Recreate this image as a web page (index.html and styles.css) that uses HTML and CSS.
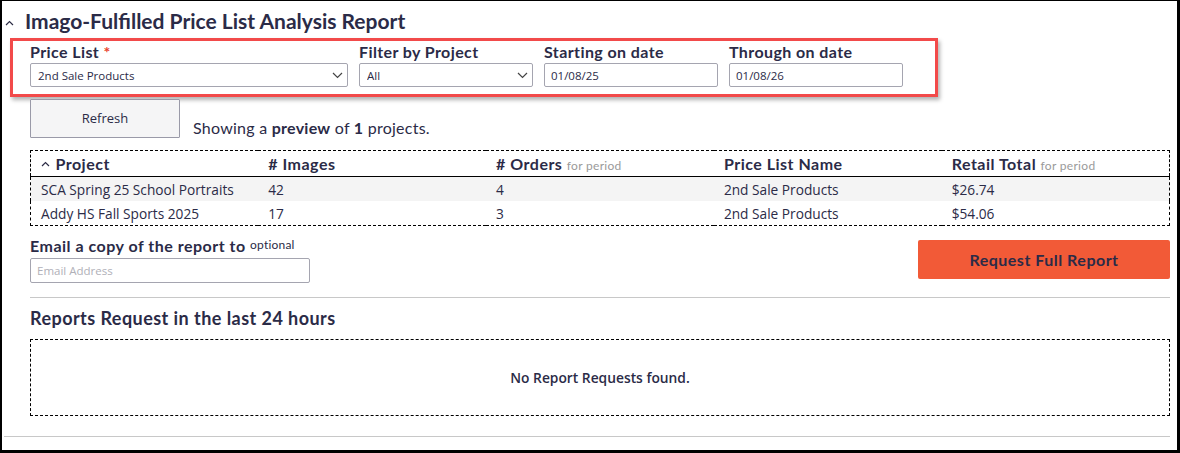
FILE: index.html
```html
<!DOCTYPE html>
<html lang="en">

<head>
  <meta charset="UTF-8">
  <meta name="viewport" content="width=device-width, initial-scale=1.0">
  <title>Price List Analysis Report</title>
  <link rel="stylesheet" href="styles.css">
</head>

<body>
  <div class="frame">
    <div class="report">
      <h2 class="report-title">
        <svg class="chev" width="9" height="6" viewBox="0 0 9 6"><path d="M1 5 L4.5 1.5 L8 5" fill="none" stroke="#2c2c45" stroke-width="1.2"/></svg>
        Imago-Fulfilled Price List Analysis Report
      </h2>

      <div class="filters">
        <div class="field field-wide">
          <label for="pricelist">Price List <span class="req">*</span></label>
          <div class="select-wrap">
            <select id="pricelist"><option>2nd Sale Products</option></select>
            <svg class="caret" width="11" height="7" viewBox="0 0 11 7"><path d="M1 1 L5.5 5.5 L10 1" fill="none" stroke="#444" stroke-width="1.2"/></svg>
          </div>
        </div>
        <div class="field">
          <label for="project">Filter by Project</label>
          <div class="select-wrap">
            <select id="project"><option>All</option></select>
            <svg class="caret" width="11" height="7" viewBox="0 0 11 7"><path d="M1 1 L5.5 5.5 L10 1" fill="none" stroke="#444" stroke-width="1.2"/></svg>
          </div>
        </div>
        <div class="field">
          <label for="start">Starting on date</label>
          <input type="text" id="start" value="01/08/25">
        </div>
        <div class="field">
          <label for="through">Through on date</label>
          <input type="text" id="through" value="01/08/26">
        </div>
      </div>

      <div class="preview-row">
        <button class="refresh" type="button">Refresh</button>
        <span class="preview-note">Showing a <b>preview</b> of <b>1</b> projects.</span>
      </div>

      <table class="preview-table">
        <thead>
          <tr>
            <th><svg class="chev" width="9" height="6" viewBox="0 0 9 6"><path d="M1 5 L4.5 1.5 L8 5" fill="none" stroke="#2c2c45" stroke-width="1.2"/></svg> Project</th>
            <th># Images</th>
            <th># Orders <small>for period</small></th>
            <th>Price List Name</th>
            <th>Retail Total <small>for period</small></th>
          </tr>
        </thead>
        <tbody>
          <tr>
            <td>SCA Spring 25 School Portraits</td>
            <td>42</td>
            <td>4</td>
            <td>2nd Sale Products</td>
            <td>$26.74</td>
          </tr>
          <tr>
            <td>Addy HS Fall Sports 2025</td>
            <td>17</td>
            <td>3</td>
            <td>2nd Sale Products</td>
            <td>$54.06</td>
          </tr>
        </tbody>
      </table>

      <div class="email-row">
        <div class="email-field">
          <label for="email">Email a copy of the report to <small>optional</small></label>
          <input type="text" id="email" placeholder="Email Address">
        </div>
        <button class="request" type="button">Request Full Report</button>
      </div>

      <hr class="rule">

      <h3 class="requests-title">Reports Request in the last 24 hours</h3>
      <div class="requests-box">No Report Requests found.</div>
    </div>
    <hr class="bottom-rule">
  </div>
</body>

</html>
```

FILE: styles.css
```css
body {
  margin: 0;
  font-family: Lato, "Open Sans", sans-serif;
  color: #2b2b47;
  background-color: white;
}

.frame {
  height: 453px;
  box-sizing: border-box;
  border-style: solid;
  border-color: black;
  border-width: 1px 3px 3px 2px;
  overflow: hidden;
}

.report {
  padding: 0 7px 0 28px;
}

.report-title {
  margin: 8px 0 0 -25px;
  font-size: 21px;
  line-height: 24px;
  font-weight: 700;
  display: flex;
  align-items: center;
  gap: 11px;
}

.report-title .chev {
  margin-top: 3px;
}

.filters {
  margin: 5px 0 0 -20px;
  width: 928px;
  box-sizing: border-box;
  border: 3px solid #f24a4a;
  box-shadow: 2px 3px 4px rgba(0, 0, 0, 0.3);
  padding: 2px 17px 7px 17px;
  display: flex;
  gap: 11px;
}

.field {
  width: 174px;
  display: flex;
  flex-direction: column;
}

.field-wide {
  width: 318px;
}

.field label {
  font-size: 16px;
  line-height: 18px;
  font-weight: 700;
  letter-spacing: 0.4px;
  margin-bottom: 2px;
  white-space: nowrap;
}

.req {
  color: #e8412c;
}

.select-wrap {
  position: relative;
}

select,
input {
  width: 100%;
  height: 24px;
  box-sizing: border-box;
  border: 1px solid #a5a5b0;
  border-radius: 2px;
  background: white;
  font-family: "Open Sans", sans-serif;
  font-size: 11.5px;
  color: #2b2b47;
  padding: 0 6px;
}

select {
  appearance: none;
  -webkit-appearance: none;
  padding-left: 7px;
}

.caret {
  position: absolute;
  right: 5px;
  top: 9px;
  pointer-events: none;
}

.preview-row {
  margin-top: 2px;
  display: flex;
  align-items: flex-end;
  gap: 13px;
}

.refresh {
  width: 150px;
  height: 39px;
  background-color: #f5f5f6;
  border: 1px solid #9a9aa8;
  border-radius: 1px;
  font-family: "Open Sans", sans-serif;
  font-size: 13px;
  color: #2b2b47;
  padding-bottom: 2px;
}

.preview-note {
  font-size: 16px;
  line-height: 20px;
  letter-spacing: 0.25px;
}

.preview-table {
  margin-top: 12px;
  width: 1140px;
  table-layout: fixed;
  border-collapse: collapse;
  border: 1px dashed black;
}

.preview-table th {
  text-align: left;
  font-size: 16px;
  font-weight: 700;
  letter-spacing: 0.5px;
  height: 25px;
  padding: 0 10px;
  border-bottom: 1px solid black;
  white-space: nowrap;
}

.preview-table th small {
  font-size: 12px;
  font-weight: 400;
  letter-spacing: 0.3px;
  color: #9a9a9a;
}

.preview-table th .chev {
  margin-right: 1px;
  vertical-align: 3px;
}

.preview-table td {
  font-family: "Open Sans", sans-serif;
  font-size: 13.7px;
  height: 24px;
  padding: 0 10px;
}

.preview-table tbody tr:first-child {
  background-color: #f4f4f4;
}

.email-row {
  margin-top: 10px;
  display: flex;
  justify-content: space-between;
  align-items: flex-start;
}

.email-field {
  display: flex;
  flex-direction: column;
}

.email-field label {
  font-size: 16px;
  line-height: 18px;
  font-weight: 700;
  letter-spacing: 0.5px;
}

.email-field small {
  font-size: 12px;
  font-weight: 400;
  letter-spacing: 0.2px;
  vertical-align: 3px;
}

.email-field input {
  margin-top: 3px;
  width: 280px;
  height: 25px;
}

.email-field input::placeholder {
  color: #b0b0b8;
}

.request {
  margin-top: 4px;
  width: 252px;
  height: 39px;
  background-color: #f25a37;
  border: 0;
  border-radius: 2px;
  font-family: Lato, sans-serif;
  font-size: 16px;
  font-weight: 700;
  letter-spacing: 0.5px;
  color: #2b2b47;
}

.rule {
  margin: 14px 0 0 0;
  border: 0;
  border-top: 1px solid #c8c8c8;
}

.requests-title {
  margin: 9px 0 0 0;
  font-size: 18px;
  line-height: 22px;
  font-weight: 700;
  letter-spacing: 0.45px;
}

.requests-box {
  margin-top: 10px;
  height: 77px;
  box-sizing: border-box;
  border: 1px dashed black;
  display: flex;
  align-items: center;
  justify-content: center;
  font-family: "Open Sans", sans-serif;
  font-size: 13.8px;
  font-weight: 600;
}

.bottom-rule {
  margin: 20px 7px 0 2px;
  border: 0;
  border-top: 1px solid #c8c8c8;
}
```
